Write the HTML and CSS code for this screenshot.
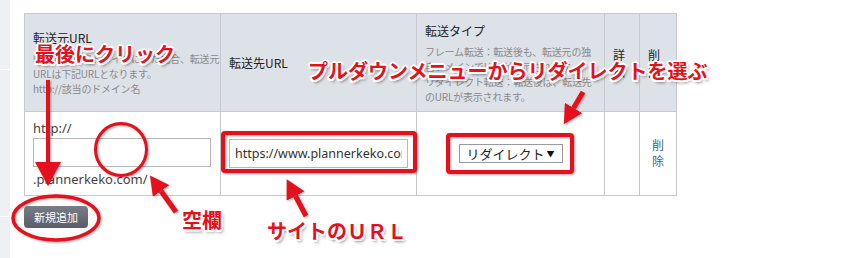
FILE: index.html
```html
<!DOCTYPE html>
<html lang="ja">
<head>
<meta charset="utf-8">
<title>転送設定</title>
<link rel="stylesheet" href="styles.css">
</head>
<body>
<div class="page">
  <aside class="side">
    <div class="side-block b1"></div>
    <div class="side-block b2"></div>
    <div class="side-block b3"></div>
  </aside>
  <main class="main">
    <table class="redir">
      <colgroup>
        <col class="w1"><col class="w2"><col class="w3"><col class="w4"><col class="w5">
      </colgroup>
      <thead>
        <tr>
          <th>
            <div class="th-title">転送元URL</div>
            <div class="th-desc">転送元を独自ドメインにした場合、転送元<br>URLは下記URLとなります。<br>http://該当のドメイン名</div>
          </th>
          <th><div class="th-title">転送先URL</div></th>
          <th>
            <div class="th-desc-wrap">
              <div class="th-title">転送タイプ</div>
              <div class="th-desc">フレーム転送：転送後も、転送元の独<br>自ドメインでURLが表示されます。<br>リダイレクト転送：転送後は、転送先<br>のURLが表示されます。</div>
            </div>
          </th>
          <th class="narrow"><div class="th-title">詳細</div></th>
          <th class="narrow"><div class="th-title">削除</div></th>
        </tr>
      </thead>
      <tbody>
        <tr>
          <td>
            <div class="line">http://</div>
            <input class="field src" type="text" value="">
            <div class="line">.plannerkeko.com/</div>
          </td>
          <td><input class="field dst" type="text" value="https://www.plannerkeko.com/"></td>
          <td class="center"><span class="select">リダイレクト<span class="caret">▼</span></span></td>
          <td></td>
          <td class="center"><a class="del" href="#">削<br>除</a></td>
        </tr>
      </tbody>
    </table>
    <button class="btn-add" type="button">新規追加</button>
  </main>
</div>

<div class="notes">
  <svg class="marks" width="867" height="258" viewBox="0 0 867 258">
    <defs>
      <marker id="headL" markerUnits="userSpaceOnUse" markerWidth="24" markerHeight="26" refX="0" refY="13" orient="auto">
        <path d="M0,0 L24,13 L0,26 Z" fill="#e5101b"/>
      </marker>
      <marker id="headS" markerUnits="userSpaceOnUse" markerWidth="19" markerHeight="20" refX="0" refY="10" orient="auto">
        <path d="M0,0 L19,10 L0,20 Z" fill="#e5101b"/>
      </marker>
    </defs>
    <g class="red">
      <rect x="223" y="133" width="192" height="38" rx="2" fill="none" stroke="#e5101b" stroke-width="4"/>
      <rect x="448" y="135" width="124" height="37" rx="2" fill="none" stroke="#e5101b" stroke-width="4"/>
      <ellipse cx="121" cy="149.5" rx="25.5" ry="26" fill="none" stroke="#e5101b" stroke-width="3"/>
      <ellipse cx="56" cy="218" rx="43" ry="22" fill="none" stroke="#e5101b" stroke-width="3.5"/>
      <line x1="48" y1="80" x2="48" y2="162" stroke="#e5101b" stroke-width="4" marker-end="url(#headL)"/>
      <line x1="176" y1="212" x2="161" y2="191" stroke="#e5101b" stroke-width="5" marker-end="url(#headS)"/>
      <line x1="306" y1="216" x2="295.5" y2="196" stroke="#e5101b" stroke-width="5" marker-end="url(#headS)"/>
      <line x1="583" y1="92" x2="573.5" y2="108" stroke="#e5101b" stroke-width="5" marker-end="url(#headS)"/>
    </g>
  </svg>
  <div class="note n1">最後にクリック</div>
  <div class="note n2">プルダウンメニューからリダイレクトを選ぶ</div>
  <div class="note n3">空欄</div>
  <div class="note n4">サイトのＵＲＬ</div>
</div>
</body>
</html>
```
FILE: styles.css
```css
html, body {
  margin: 0;
  padding: 0;
  background: #ffffff;
}
body {
  width: 867px;
  height: 258px;
  position: relative;
  overflow: hidden;
  font-family: "Noto Sans", "Noto Sans CJK JP", sans-serif;
  color: #333;
}
.page {
  display: flex;
  height: 258px;
}
.side {
  width: 10px;
  display: flex;
  flex-direction: column;
  gap: 1px;
  background: #ffffff;
}
.side-block {
  background: #eef0f4;
}
.side-block.b1 { height: 69px; }
.side-block.b2 { height: 146px; }
.side-block.b3 { flex: 1; }

.main {
  padding: 13px 0 0 14px;
}
.redir {
  border-collapse: collapse;
  table-layout: fixed;
  width: 653px;
  border: 1px solid #c8c9cc;
}
.w1 { width: 196px; }
.w2 { width: 196px; }
.w3 { width: 188px; }
.w4 { width: 35px; }
.w5 { width: 37px; }

.redir th {
  background: #dde1e8;
  border: 1px solid #c8c9cc;
  height: 97px;
  padding: 0 8px;
  text-align: left;
  vertical-align: middle;
  font-weight: normal;
}
.th-title {
  font-family: "Noto Sans CJK JP", sans-serif;
  font-size: 12px;
  line-height: 17px;
  color: #222;
}
.th-desc {
  margin-top: 5px;
  font-family: "Noto Sans CJK JP", sans-serif;
  font-size: 10px;
  line-height: 15px;
  color: #8a8a8a;
  white-space: nowrap;
  letter-spacing: -0.2px;
}
.narrow { word-break: break-all; }

.redir td {
  border: 1px solid #c8c9cc;
  height: 83px;
  padding: 0 8px;
  vertical-align: middle;
  font-size: 13px;
  color: #444;
}
.redir td.center { text-align: center; }
.line {
  line-height: 16px;
}
.field {
  display: block;
  box-sizing: border-box;
  height: 29px;
  border: 1px solid #b8b8b8;
  background: #fff;
  font-family: "Noto Sans", sans-serif;
  font-size: 12.5px;
  color: #333;
  padding: 0 5px;
  margin: 0;
}
.field.src {
  width: 178px;
  margin: 2px 0 4px;
}
.field.dst {
  width: 179px;
}
.select {
  display: inline-flex;
  align-items: center;
  box-sizing: border-box;
  height: 19px;
  width: 104px;
  padding: 0 7px;
  border: 1px solid #9a9a9a;
  background: #fff;
  font-family: "Noto Sans CJK JP", sans-serif;
  font-size: 13px;
  color: #222;
  justify-content: space-between;
}
.caret {
  font-size: 8px;
  color: #111;
}
.del {
  display: inline-block;
  font-family: "Noto Sans CJK JP", sans-serif;
  font-size: 12px;
  line-height: 16px;
  color: #3a63a6;
  text-decoration: none;
}
.btn-add {
  display: block;
  margin-top: 10px;
  width: 64px;
  height: 22px;
  border: 0;
  border-radius: 4px;
  background: linear-gradient(#7a7d87, #5a5d67);
  color: #fff;
  font-family: "Noto Sans CJK JP", sans-serif;
  font-size: 11px;
  line-height: 22px;
  padding: 0;
}

.notes {
  position: absolute;
  left: 0;
  top: 0;
  width: 867px;
  height: 258px;
  pointer-events: none;
}
.marks {
  position: absolute;
  left: 0;
  top: 0;
}
.red {
  filter: drop-shadow(1px 1px 1px rgba(0, 0, 0, 0.35));
}
.note {
  position: absolute;
  font-family: "Noto Sans CJK JP", sans-serif;
  font-weight: 700;
  font-size: 20px;
  line-height: 20px;
  color: #e5101b;
  white-space: nowrap;
  text-shadow:
    -1.5px -1.5px 0 #fff, 1.5px -1.5px 0 #fff, -1.5px 1.5px 0 #fff, 1.5px 1.5px 0 #fff,
    0 -2px 0 #fff, 0 2px 0 #fff, -2px 0 0 #fff, 2px 0 0 #fff,
    2px 3px 3px rgba(0, 0, 0, 0.45);
}
.n1 { left: 35px; top: 44px; }
.n2 { left: 308px; top: 61px; }
.n3 { left: 182px; top: 210px; }
.n4 { left: 267px; top: 221px; }
```
